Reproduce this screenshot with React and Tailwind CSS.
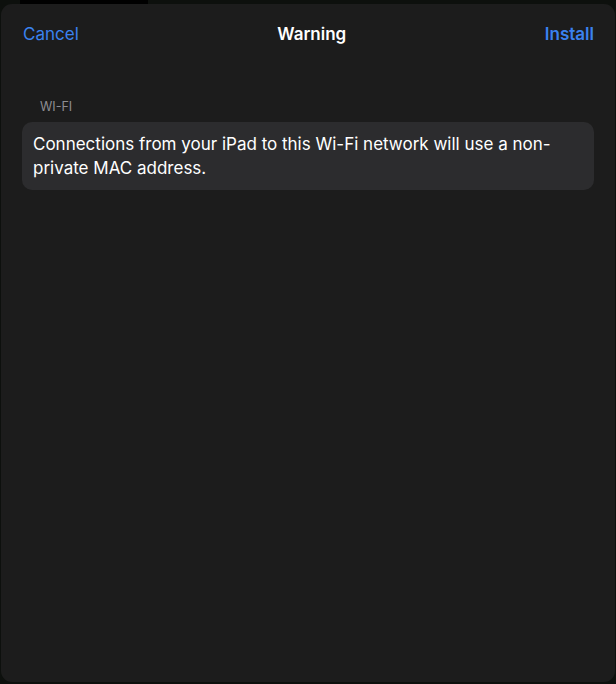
export default function App() {
  return (
    <div className="relative w-[616px] h-[684px] bg-[#0d100d] flex flex-col pt-[4px] pb-[2px] px-[1px]" style={{ fontFamily: 'Inter, "Noto Sans", sans-serif' }}>
      <div className="absolute left-[20px] top-0 w-[128px] h-[4px] bg-black" />
      <div className="flex-1 rounded-[11px] bg-[#1c1c1c] flex flex-col">
        <div className="h-[58px] pt-[4px] flex items-center justify-between pl-[22px] pr-[21px] text-[17px]">
          <span className="text-[#3a82f0]">Cancel</span>
          <span className="text-white font-semibold">Warning</span>
          <span className="text-[#3a82f0] font-semibold">Install</span>
        </div>
        <div className="px-[21px] pt-[37px]">
          <div className="pl-[18px] text-[12.5px] text-[#8d8d92] leading-[16px] uppercase">Wi-Fi</div>
          <div className="mt-[7px] rounded-[10px] bg-[#2c2c2e] px-[11px] py-[10px] text-[17px] leading-[24px] text-white">
            Connections from your iPad to this Wi-Fi network will use a non-private MAC address.
          </div>
        </div>
      </div>
    </div>
  );
}
